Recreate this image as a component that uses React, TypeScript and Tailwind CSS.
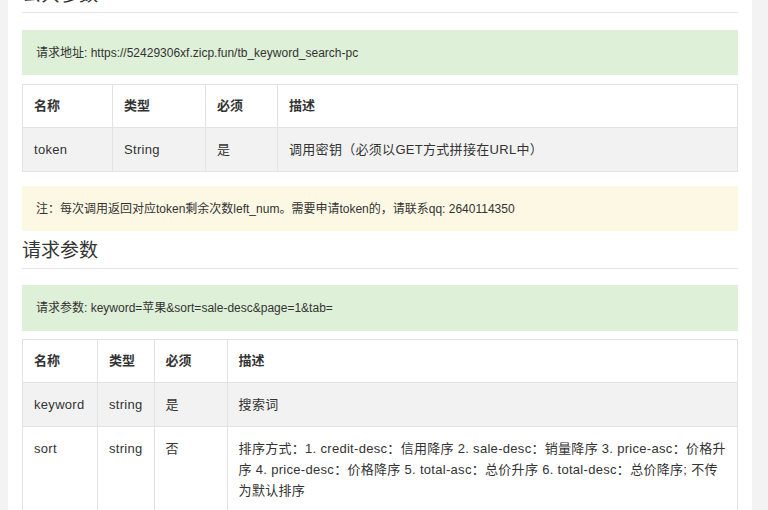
const font = { fontFamily: '"Liberation Sans", "Noto Sans CJK SC", sans-serif' };

function Heading({ children, className = "" }: { children: string; className?: string }) {
  return (
    <h2 className={`border-b border-[#e6e6e6] pb-[4px] text-[19px] leading-[26px] text-[#333] ${className}`}>{children}</h2>
  );
}

function Table({ cols, rows }: { cols: string[]; rows: string[][] }) {
  return (
    <table className="w-full border-collapse border border-[#e3e3e3] text-[13px] text-[#333]">
      <colgroup>
        {cols.map((c, i) => (
          <col key={i} style={{ width: c }} />
        ))}
      </colgroup>
      <thead>
        <tr className="h-[43px] bg-white">
          {["名称", "类型", "必须", "描述"].map((h) => (
            <th key={h} className="border border-[#e3e3e3] px-[11px] text-left font-bold">{h}</th>
          ))}
        </tr>
      </thead>
      <tbody>
        {rows.map((r, i) => (
          <tr key={i} className={i % 2 === 0 ? "h-[44px] bg-[#f2f2f2]" : "h-[44px] bg-white"}>
            {r.map((c, j) => (
              <td key={j} className="border border-[#e3e3e3] px-[11px] py-[11px] align-top leading-[21px] tracking-[0.3px]">{c}</td>
            ))}
          </tr>
        ))}
      </tbody>
    </table>
  );
}

export default function App() {
  return (
    <div className="h-[510px] overflow-hidden bg-[#f3f3f3]" style={font}>
      <div className="ml-[8px] w-[744px] bg-white px-[14px] pb-8">
        <Heading className="-mt-[18px]">公共参数</Heading>
        <div className="mt-[17px] flex h-[45px] items-center bg-[#dff0d8] px-[14px] text-[12px] text-[#333]">
          请求地址: https://52429306xf.zicp.fun/tb_keyword_search-pc
        </div>
        <div className="mt-[9px]">
          <Table cols={["90px", "93px", "72px", "auto"]} rows={[["token", "String", "是", "调用密钥（必须以GET方式拼接在URL中）"]]} />
        </div>
        <div className="mt-[14px] flex h-[45px] items-center bg-[#fcf8e3] px-[14px] text-[12px] text-[#333]">
          注：每次调用返回对应token剩余次数left_num。需要申请token的，请联系qq: 2640114350
        </div>
        <Heading className="mt-[7px]">请求参数</Heading>
        <div className="mt-[16px] flex h-[46px] items-center bg-[#dff0d8] px-[14px] text-[12px] text-[#333]">
          请求参数: keyword=苹果&sort=sale-desc&page=1&tab=
        </div>
        <div className="mt-[8px]">
          <Table
            cols={["75px", "55px", "73px", "auto"]}
            rows={[
              ["keyword", "string", "是", "搜索词"],
              ["sort", "string", "否", "排序方式：1. credit-desc：信用降序 2. sale-desc：销量降序 3. price-asc：价格升序 4. price-desc：价格降序 5. total-asc：总价升序 6. total-desc：总价降序; 不传为默认排序"],
            ]}
          />
        </div>
      </div>
    </div>
  );
}
